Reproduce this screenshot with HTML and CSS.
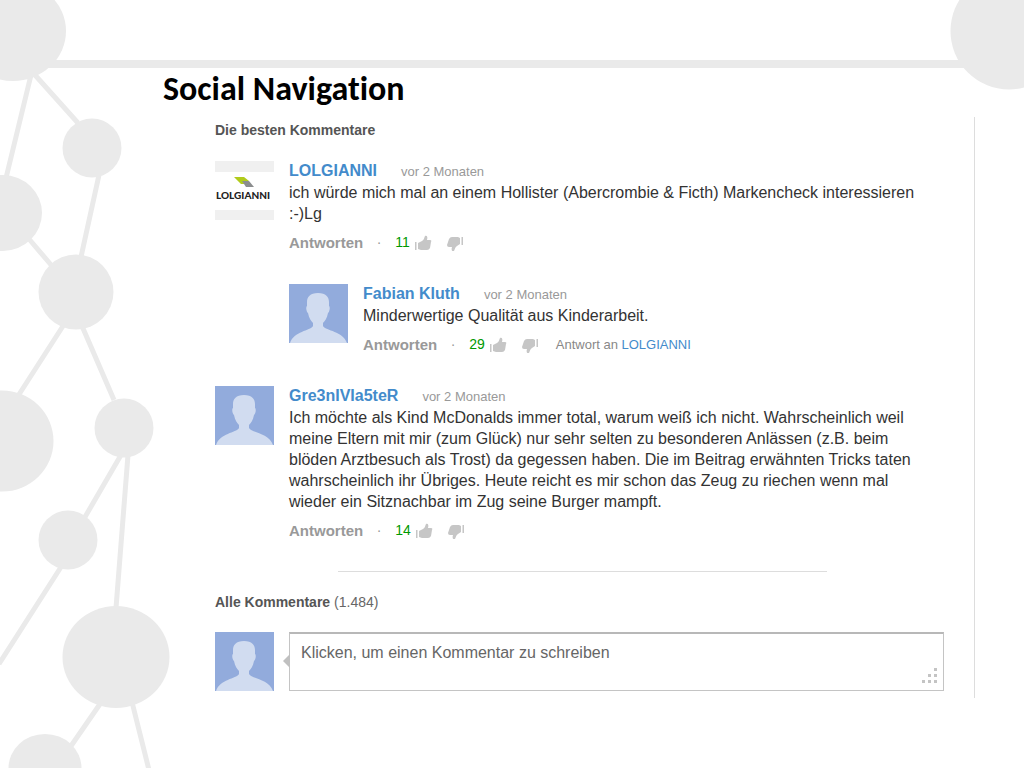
FILE: index.html
```
<!DOCTYPE html>
<html lang="de">
<head>
<meta charset="utf-8">
<title>Social Navigation</title>
<link rel="stylesheet" href="styles.css">
</head>
<body>
<svg class="network" width="180" height="768" viewBox="0 0 180 768" aria-hidden="true">
  <g stroke-width="5" fill="none">
    <path d="M31 75 6 178M35 75 78 123M99 175 81 257M29 239 52 266M63 326 18 396M82 326 114 400M121 455 85 517M128 455 116 608M61 567-1 664M100 704 71 746M132 702 149 770"/>
  </g>
  <g stroke="none">
    <ellipse cx="13" cy="31" rx="53" ry="50"/>
    <circle cx="92" cy="148" r="29.500"/>
    <ellipse cx="3" cy="213" rx="39" ry="38"/>
    <circle cx="76" cy="292" r="37.500"/>
    <circle cx="124" cy="428" r="29.500"/>
    <ellipse cx="2" cy="441" rx="51.500" ry="50.500"/>
    <circle cx="68" cy="540" r="29.500"/>
    <ellipse cx="116" cy="657" rx="53.500" ry="51"/>
    <ellipse cx="45" cy="768" rx="36.500" ry="34"/>
  </g>
</svg>
<div class="top-bar"></div>
<svg class="corner" width="74" height="92" viewBox="0 0 74 92" aria-hidden="true"><ellipse cx="59" cy="31" rx="58.500" ry="58.500"/></svg>

<svg class="symbols" aria-hidden="true">
  <symbol id="person" viewBox="0 0 59 59">
    <rect width="59" height="59" fill="#92abdc"/>
    <path fill="#d1dcf0" d="M29 9c8 0 11 4 11 9v4c1.500 1 .5 6-1 7-1 5-3 8-5 10v3c3 5 20 5 24 17H1c4-12 20-12 23-17v-3c-2-2-4-5-5-10-1.500-1-2.500-6-1-7v-4c0-5 3-9 11-9z"/>
  </symbol>
  <symbol id="up" viewBox="0 0 17 16">
    <path d="M0 7h1.500v8H0zM3 8l4-2c2-1 2-3 3-5 2-1 3 1 2 4h3q2 0 1 2l-1 6q-1 2-3 2H6l-3-1z"/>
  </symbol>
  <symbol id="down" viewBox="0 0 17 16">
    <path d="M14.500 2H16v8h-1.500zM13 9l-3 2c-2 1-2 3-3 5-2 1-3-1-2-4H2q-2 0-2-2l2-6q1-2 3-2h6l2 1z"/>
  </symbol>
</svg>

<main class="slide">
  <h1 class="title">Social Navigation</h1>
  <div class="panel">
    <h2 class="heading">Die besten Kommentare</h2>

    <article class="comment">
      <svg class="avatar" viewBox="0 0 59 59" role="img" aria-label="LOLGIANNI">
        <rect width="59" height="59" fill="#fff"/>
        <path fill="#f0f0f0" d="M0 0h59v11H0zM0 49h59v10H0z"/>
        <path fill="#b1cb1b" d="M19 16h10l5 4h-6l2 3h-4z"/>
        <path fill="#8b8d8e" d="M27 20h7l5 6h-8z"/>
        <text class="logo-text" x="1" y="38">LOLGIANNI</text>
      </svg>
      <div class="body">
        <div class="meta"><a class="name" href="#">LOLGIANNI</a><span class="time">vor 2 Monaten</span></div>
        <p class="text">ich würde mich mal an einem Hollister (Abercrombie &amp; Ficth) Markencheck interessieren :-)Lg</p>
        <div class="actions"><button class="reply">Antworten</button><span class="dot">·</span><span class="count">11</span><button class="vote" aria-label="Mag ich"><svg><use href="#up"/></svg></button><button class="vote down" aria-label="Mag ich nicht"><svg><use href="#down"/></svg></button></div>
      </div>
    </article>

    <article class="comment nested">
      <svg class="avatar" role="img" aria-label="Fabian Kluth"><use href="#person"/></svg>
      <div class="body">
        <div class="meta"><a class="name" href="#">Fabian Kluth</a><span class="time">vor 2 Monaten</span></div>
        <p class="text">Minderwertige Qualität aus Kinderarbeit.</p>
        <div class="actions"><button class="reply">Antworten</button><span class="dot">·</span><span class="count">29</span><button class="vote" aria-label="Mag ich"><svg><use href="#up"/></svg></button><button class="vote down" aria-label="Mag ich nicht"><svg><use href="#down"/></svg></button><span class="reply-to">Antwort an <a href="#">LOLGIANNI</a></span></div>
      </div>
    </article>

    <article class="comment">
      <svg class="avatar" role="img" aria-label="Gre3nIVIa5teR"><use href="#person"/></svg>
      <div class="body">
        <div class="meta"><a class="name" href="#">Gre3nIVIa5teR</a><span class="time">vor 2 Monaten</span></div>
        <p class="text">Ich möchte als Kind McDonalds immer total, warum weiß ich nicht. Wahrscheinlich weil meine Eltern mit mir (zum Glück) nur sehr selten zu besonderen Anlässen (z.B. beim blöden Arztbesuch als Trost) da gegessen haben. Die im Beitrag erwähnten Tricks taten wahrscheinlich ihr Übriges. Heute reicht es mir schon das Zeug zu riechen wenn mal wieder ein Sitznachbar im Zug seine Burger mampft.</p>
        <div class="actions"><button class="reply">Antworten</button><span class="dot">·</span><span class="count">14</span><button class="vote" aria-label="Mag ich"><svg><use href="#up"/></svg></button><button class="vote down" aria-label="Mag ich nicht"><svg><use href="#down"/></svg></button></div>
      </div>
    </article>

    <hr class="rule">
    <h2 class="heading">Alle Kommentare <span class="total">(1.484)</span></h2>

    <form class="compose">
      <svg class="avatar" aria-hidden="true"><use href="#person"/></svg>
      <div class="field">
        <svg class="pointer" width="7" height="14" viewBox="0 0 7 14" aria-hidden="true"><path d="M7 0v14L0 7z"/></svg>
        <textarea class="input" aria-label="Kommentar" placeholder="Klicken, um einen Kommentar zu schreiben"></textarea>
        <svg class="grip" width="15" height="15" viewBox="0 0 15 15" aria-hidden="true"><path d="M12 0h3v3h-3zM6 6h3v3H6zM12 6h3v3h-3zM0 12h3v3H0zM6 12h3v3H6zM12 12h3v3h-3z"/></svg>
      </div>
    </form>
  </div>
</main>
</body>
</html>
```

FILE: styles.css
```
* { box-sizing: border-box; }
body {
  margin: 0;
  position: relative;
  min-height: 100vh;
  background: #fff;
  color: #333;
  font-family: "Liberation Sans", Arial, sans-serif;
  font-size: 16px;
  line-height: 21px;
  overflow-x: hidden;
}
.network, .corner { position: absolute; top: 0; fill: #eaeaea; stroke: #eaeaea; }
.network { left: 0; }
.corner { right: 0; stroke: none; }
.top-bar { position: absolute; top: 60px; left: 40px; right: 40px; height: 8px; background: #eaeaea; }
.symbols { position: absolute; width: 0; height: 0; }

.slide { position: relative; padding: 69px 49px 0 163px; }
.title {
  margin: 0;
  color: #000;
  font-family: Carlito, Lato, sans-serif;
  font-size: 34px;
  font-weight: 700;
  font-variant-ligatures: none;
  line-height: 40px;
}
.panel {
  margin: 8px 0 0 52px;
  padding: 3px 30px 7px 0;
  border-right: 1px solid #ddd;
}
.heading { margin: 0; color: #555; font-size: 14px; font-weight: 700; line-height: 21px; }
.total { font-weight: 400; color: #666; }

.comment { display: flex; gap: 15px; padding-top: 20px; }
.comment + .comment { padding-top: 31px; }
.nested { margin-left: 74px; }
.avatar { flex: none; width: 59px; height: 59px; }
.logo-text { font-family: Lato, sans-serif; font-size: 10px; font-weight: 900; fill: #222; }
.body { flex: 1; min-width: 0; margin-top: -1px; }
.meta { display: flex; gap: 24px; align-items: baseline; }
.name { color: #438bcb; font-weight: 700; text-decoration: none; }
.time { color: #999; font-size: 13px; }
.text { margin: 0; max-width: 640px; }
.actions { display: flex; align-items: center; height: 21px; margin-top: 8px; font-size: 14px; }
button { border: 0; padding: 0; background: none; font: inherit; cursor: pointer; }
.reply { color: #999; font-size: 15px; font-weight: 700; }
.dot { width: 32px; color: #999; text-align: center; }
.count { color: #090; }
.vote { display: flex; margin-left: 5px; fill: #c6c6c6; }
.vote svg { width: 17px; height: 16px; }
.vote.down { margin-left: 15px; }
.reply-to { margin-left: 17px; color: #888; font-size: 13px; }
.reply-to a { color: #438bcb; text-decoration: none; }

.rule { margin: 30px 117px 20px 123px; border: 0; border-top: 1px solid #ddd; }
.compose { display: flex; gap: 15px; margin-top: 19px; }
.field { position: relative; flex: 1; }
.input {
  display: block;
  width: 100%;
  height: 59px;
  padding: 8px 11px;
  border: 1px solid #c4c4c4;
  border-top: 2px solid #b8b8b8;
  background: #fff;
  color: #333;
  font: inherit;
  resize: none;
}
.input::placeholder { color: #666; opacity: 1; }
.pointer { position: absolute; left: -6px; top: 22px; fill: #c0c0c0; }
.grip { position: absolute; right: 7px; bottom: 8px; fill: #c4c4c4; }
```
